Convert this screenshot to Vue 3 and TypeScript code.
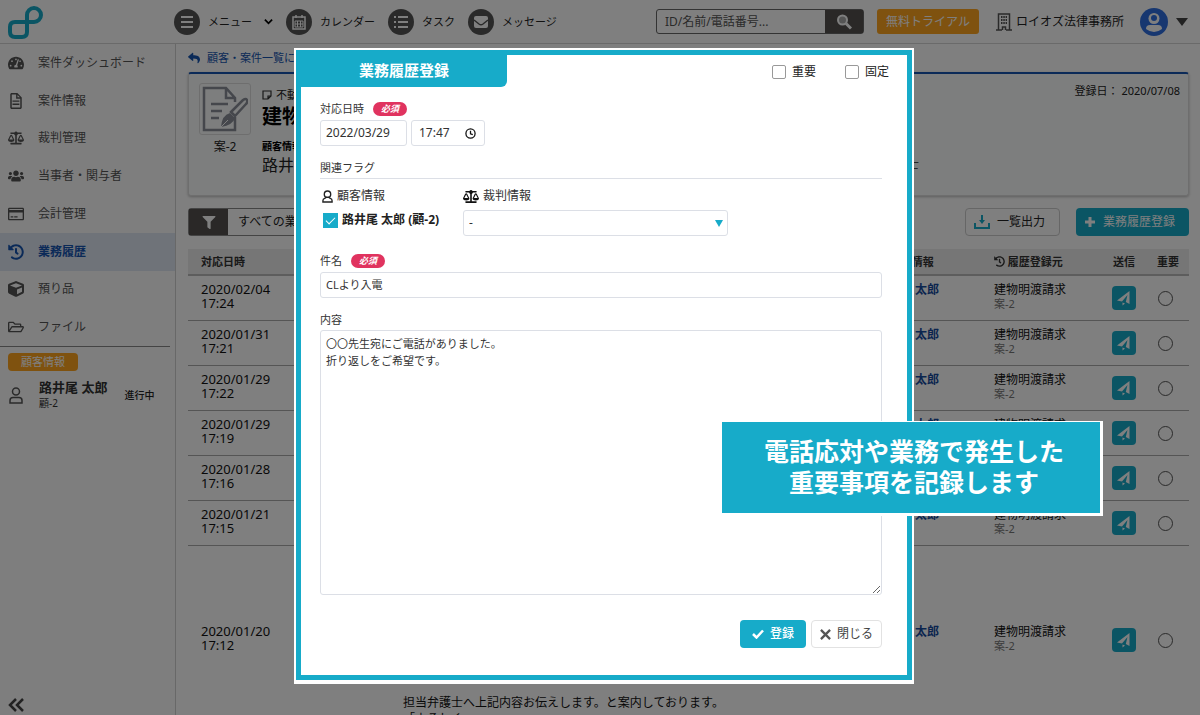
<script setup lang="ts">
import { ref } from 'vue'

interface NavItem {
  label: string
  icon: string
  box: string
  active?: boolean
}

const icons = {
  gauge:
    'M288 32C128.94 32 0 160.94 0 320c0 52.8 14.25 102.26 39.06 144.8 5.61 9.62 16.3 15.2 27.44 15.2h443c11.14 0 21.83-5.58 27.44-15.2C561.75 422.26 576 372.8 576 320c0-159.06-128.94-288-288-288zm0 64c14.71 0 26.58 10.13 30.32 23.65-1.11 2.26-2.64 4.23-3.45 6.67l-9.22 27.67c-5.13 3.49-10.97 6.01-17.64 6.01-17.67 0-32-14.33-32-32S270.33 96 288 96zM96 384c-17.67 0-32-14.33-32-32s14.33-32 32-32 32 14.33 32 32-14.33 32-32 32zm48-160c-17.67 0-32-14.33-32-32s14.33-32 32-32 32 14.33 32 32-14.33 32-32 32zm246.77-72.41l-61.33 184C343.13 347.33 352 364.54 352 384c0 11.72-3.38 22.55-8.88 32H232.88c-5.5-9.45-8.88-20.28-8.88-32 0-33.94 26.5-61.43 59.9-63.59l61.34-184.01c4.17-12.56 17.73-19.45 30.36-15.17 12.57 4.19 19.35 17.79 15.17 30.36zm14.66 57.2l15.52-46.55c3.47-1.29 7.13-2.23 11.05-2.23 17.67 0 32 14.33 32 32s-14.33 32-32 32c-11.38-.01-20.89-6.28-26.57-15.22zM480 384c-17.67 0-32-14.33-32-32s14.33-32 32-32 32 14.33 32 32-14.33 32-32 32z',
  file:
    'M64 0h180l140 140v324c0 27-21 48-48 48H64c-27 0-48-21-48-48V48C16 21 37 0 64 0zm0 48v416h272V180H204V48zm184 12v76h76zM88 236h220v44H88zm0 100h220v44H88z',
  scale:
    'M256 336h-.02c0-16.18 1.34-8.73-85.05-181.51-17.65-35.29-68.19-35.36-85.87 0C-2.06 328.75.02 320.33.02 336H0c0 44.18 57.31 80 128 80s128-35.82 128-80zM128 176l72 144H56l72-144zm511.98 160c0-16.18 1.34-8.73-85.05-181.51-17.65-35.29-68.19-35.36-85.87 0-87.12 174.26-85.04 165.84-85.04 181.51H384c0 44.18 57.31 80 128 80s128-35.82 128-80h-.02zM440 320l72-144 72 144H440zm88 128H352V153.25c23.51-10.29 41.16-31.48 46.39-57.25H528c8.84 0 16-7.16 16-16V48c0-8.84-7.16-16-16-16H383.64C369.04 12.68 346.09 0 320 0s-49.04 12.68-63.64 32H112c-8.84 0-16 7.16-16 16v32c0 8.84 7.16 16 16 16h129.61c5.23 25.76 22.87 46.96 46.39 57.25V448H112c-8.84 0-16 7.16-16 16v32c0 8.84 7.16 16 16 16h416c8.84 0 16-7.16 16-16v-32c0-8.84-7.16-16-16-16z',
  users:
    'M96 224c35.3 0 64-28.700 64-64s-28.700-64-64-64-64 28.700-64 64 28.700 64 64 64zm448 0c35.300 0 64-28.700 64-64s-28.700-64-64-64-64 28.700-64 64 28.700 64 64 64zm32 32h-64c-17.600 0-33.500 7.100-45.100 18.600 40.300 22.100 68.900 62 75.100 109.400h66c17.700 0 32-14.300 32-32v-32c0-35.300-28.700-64-64-64zm-256 0c61.900 0 112-50.100 112-112S381.900 32 320 32 208 82.100 208 144s50.100 112 112 112zm76.800 32h-8.300c-20.800 10-43.900 16-68.500 16s-47.600-6-68.500-16h-8.300C179.600 288 128 339.600 128 403.200V432c0 26.500 21.500 48 48 48h288c26.500 0 48-21.500 48-48v-28.800c0-63.600-51.600-115.200-115.200-115.200zm-223.700-13.400C161.500 263.100 145.600 256 128 256H64c-35.300 0-64 28.700-64 64v32c0 17.700 14.300 32 32 32h65.900c6.300-47.400 34.900-87.300 75.200-109.400z',
  card:
    'M48 32h480c27 0 48 21 48 48v352c0 27-21 48-48 48H48c-27 0-48-21-48-48V80c0-27 21-48 48-48zm0 48v36h480V80zm0 124v228h480V204zm48 132h96v48H96zm128 0h120v48H224z',
  history:
    'M504 255.531c.253 136.64-111.18 248.372-247.82 248.468-59.015.042-113.223-20.53-155.822-54.911-11.077-8.94-11.905-25.541-1.839-35.607l11.267-11.267c8.609-8.609 22.353-9.551 31.891-1.984C173.062 425.135 212.781 440 256 440c101.705 0 184-82.311 184-184 0-101.705-82.311-184-184-184-48.814 0-93.149 18.969-126.068 49.932l50.754 50.754c10.08 10.08 2.941 27.314-11.313 27.314H24c-8.837 0-16-7.163-16-16V38.627c0-14.254 17.234-21.393 27.314-11.314l49.372 49.372C129.209 34.136 189.552 8 256 8c136.81 0 247.747 110.78 248 247.531zm-180.912 78.784l9.823-12.63c8.138-10.463 6.253-25.542-4.21-33.679L288 256.349V152c0-13.255-10.745-24-24-24h-16c-13.255 0-24 10.745-24 24v135.651l65.409 50.874c10.463 8.137 25.541 6.253 33.679-4.21z',
  cube:
    'M239.1 6.3l-208 78c-18.7 7-31.1 25-31.1 45v225.1c0 18.2 10.3 34.8 26.5 42.9l208 104c13.5 6.8 29.4 6.8 42.9 0l208-104c16.3-8.1 26.5-24.8 26.5-42.9V129.3c0-20-12.4-37.9-31.1-44.9l-208-78C262 2.2 250 2.2 239.1 6.3zM256 68.4l192 72v1.1l-192 78-192-78v-1.100l192-72zm32 356V275.5l160-65v133.9l-160 80z',
  folder:
    'M48 64h150l64 64h170c27 0 48 21 48 48v48h48c36 0 58 38 40 70l-78 134c-9 14-24 20-40 20H48c-27 0-48-21-48-48V112c0-27 21-48 48-48zm0 48v246l64-110c8-15 23-24 40-24h280v-48H242l-64-64zm104 160L72 400h378l78-128z',
  reply:
    'M8.309 189.836L184.313 37.851C199.719 24.546 224 35.347 224 56.015v80.053c160.629 1.839 288 34.032 288 186.258 0 61.441-39.581 122.309-83.333 154.132-13.653 9.931-33.111-2.533-28.077-18.631 45.344-145.012-21.507-183.51-176.59-185.742V360c0 20.700-24.300 31.453-39.687 18.164l-176.004-152c-11.071-9.562-11.086-26.753 0-36.328z',
  filter:
    'M487.976 0H24.028C2.71 0-8.047 25.866 7.058 40.971L192 225.941V432c0 7.831 3.821 15.17 10.237 19.662l80 55.98C298.02 518.69 320 507.493 320 487.98V225.941l184.947-184.970C520.021 25.896 509.338 0 487.976 0z',
}

const navItems: NavItem[] = [
  { label: '案件ダッシュボード', icon: icons.gauge, box: '0 0 576 512' },
  { label: '案件情報', icon: icons.file, box: '0 0 400 512' },
  { label: '裁判管理', icon: icons.scale, box: '0 0 640 512' },
  { label: '当事者・関与者', icon: icons.users, box: '0 0 640 512' },
  { label: '会計管理', icon: icons.card, box: '0 0 576 512' },
  { label: '業務履歴', icon: icons.history, box: '0 0 512 512', active: true },
  { label: '預り品', icon: icons.cube, box: '0 0 512 512' },
  { label: 'ファイル', icon: icons.folder, box: '0 0 576 512' },
]

const rows = [
  { date: '2020/02/04', time: '17:24', lines: [] as string[] },
  { date: '2020/01/31', time: '17:21', lines: [] },
  { date: '2020/01/29', time: '17:22', lines: [] },
  { date: '2020/01/29', time: '17:19', lines: [] },
  { date: '2020/01/28', time: '17:16', lines: [] },
  { date: '2020/01/21', time: '17:15', lines: [] },
  {
    date: '2020/01/20',
    time: '17:12',
    lines: ['担当弁護士へ上記内容お伝えします。と案内しております。', '「よろしく」'],
  },
]

const keyword = ref('')
const important = ref(false)
const pinned = ref(false)
const date = ref('2022/03/29')
const time = ref('17:47')
const client = ref(true)
const trial = ref('-')
const subject = ref('CLより入電')
const body = ref('〇〇先生宛にご電話がありました。\n折り返しをご希望です。')
</script>

<template>
  <div class="app">
    <header class="topbar">
      <a href="#" class="logo" aria-label="ホーム">
        <svg viewBox="0 0 36 36" width="36" height="36" fill="none" stroke="#17abc9" stroke-width="4">
          <path d="M20 19V11A7 7 0 1 1 27 18H8Q3 18 3 23V28Q3 33 8 33H15Q20 33 20 28Z" />
        </svg>
      </a>
      <nav class="topnav">
        <a href="#" class="toplink">
          <span class="disc"><svg viewBox="0 0 16 16" width="16" height="16" fill="none" stroke="#fff" stroke-width="2"><path d="M2 3h12M2 8h12M2 13h12" /></svg></span>
          メニュー
          <svg class="chev" viewBox="0 0 10 10" width="9" height="9" fill="none" stroke="#000" stroke-width="2"><path d="M1 3l4 4 4-4" /></svg>
        </a>
        <a href="#" class="toplink">
          <span class="disc"><svg viewBox="0 0 16 16" width="16" height="16" fill="none" stroke="#fff" stroke-width="1"><path stroke-width="1.500" d="M2 3h12v12H2zM5 1v3M11 1v3" /><path d="M4 7h8v6H4zM4 10h8M6.500 7v6M9.500 7v6" /></svg></span>
          カレンダー
        </a>
        <a href="#" class="toplink">
          <span class="disc"><svg viewBox="0 0 16 16" width="16" height="16" fill="none" stroke="#fff" stroke-width="2"><path d="M1 3h2M5 3h10M1 8h2M5 8h10M1 13h2M5 13h10" /></svg></span>
          タスク
        </a>
        <a href="#" class="toplink">
          <span class="disc"><svg viewBox="0 0 16 16" width="16" height="16"><rect x="1" y="2" width="14" height="12" rx="2" fill="#fff" /><path d="M1 6l5 4q2 1.500 4 0l5-4" fill="none" stroke="#555" stroke-width="1.500" /></svg></span>
          メッセージ
        </a>
      </nav>
      <form class="search" @submit.prevent>
        <input v-model="keyword" type="text" aria-label="検索" placeholder="ID/名前/電話番号..." />
        <button type="submit" aria-label="検索する">
          <svg viewBox="0 0 16 16" width="16" height="16" fill="none" stroke="#fff"><circle cx="6.500" cy="6" r="4.500" stroke-width="2" fill="#aaa" /><path d="M10 9.500l5 5" stroke-width="3" /></svg>
        </button>
      </form>
      <button type="button" class="trial">無料トライアル</button>
      <span class="office">
        <svg viewBox="0 0 16 18" width="16" height="18" fill="none" stroke="#555" stroke-width="1.500"><path d="M2.500 17V1h11v16M0 17h6M10 17h6" /><path d="M6.500 17v-3h3v3" /><path d="M5 4h6M5 7h6M5 10h6" stroke-width="2" stroke-dasharray="1.500 .8" /></svg>
        ロイオズ法律事務所
      </span>
      <button type="button" class="account" aria-label="アカウント">
        <svg viewBox="0 0 28 28" width="28" height="28"><circle cx="14" cy="14" r="14" fill="#2f6fe0" /><circle cx="14" cy="10.500" r="5.500" fill="#fff" /><circle cx="14" cy="10" r="3" fill="#2f6fe0" /><path d="M6 21q0-4 4-4h8q4 0 4 4q-8 6-16 0z" fill="#fff" /></svg>
        <svg viewBox="0 0 12 8" width="12" height="8"><path d="M0 0h12L6 8z" fill="#444" /></svg>
      </button>
    </header>

    <div class="columns">
      <aside class="sidebar">
        <nav class="sidenav">
          <a v-for="item in navItems" :key="item.label" href="#" :class="{ active: item.active }">
            <svg :viewBox="item.box" width="16" height="16" fill="currentColor" fill-rule="evenodd"><path :d="item.icon" /></svg>
            {{ item.label }}
          </a>
        </nav>
        <div class="client">
          <span class="tag">顧客情報</span>
          <a href="#" class="person">
            <svg viewBox="0 0 14 17" width="16" height="17" fill="none" stroke="#555" stroke-width="1.500"><circle cx="7" cy="4.500" r="3.500" /><path d="M1 16v-2.500q0-3 3-3h6q3 0 3 3V16z" /></svg>
            <span class="who"><b>路井尾 太郎</b><small>顧-2</small></span>
            <span class="state">進行中</span>
          </a>
        </div>
        <button type="button" class="collapse" aria-label="メニューを閉じる">
          <svg viewBox="0 0 16 14" width="16" height="14" fill="none" stroke="#444" stroke-width="2.500"><path d="M8 1L2 7l6 6M15 1L9 7l6 6" /></svg>
        </button>
      </aside>

      <main class="main">
        <a href="#" class="back">
          <svg viewBox="0 0 512 512" width="12" height="12" fill="currentColor"><path :d="icons.reply" /></svg>
          顧客・案件一覧に戻る
        </a>
        <section class="case">
          <div class="case-id">
            <div class="thumb">
              <svg viewBox="0 0 46 46" width="46" height="46" fill="none" stroke="#8a8f99" stroke-width="2.500">
                <path d="M33 31V44H2V2H24L33 12V16M24 2V12H33M9 18H26M9 25H20M9 32H17" />
                <path d="M29 26L41 14q3-2 4 0t-1 4L33 30z" /><path d="M28 27l5 5q-2 7-14 9q1-12 9-14z" fill="#8a8f99" stroke="none" /><path d="M19 41l7-7" stroke="#fff" stroke-width="1" />
              </svg>
            </div>
            案-2
          </div>
          <div class="case-body">
            <span class="kind"><svg viewBox="0 0 10 10" width="10" height="10" fill="none" stroke="#333" stroke-width="1.200"><path d="M1 1h8v5L6 9H1zM6 9V6h3" /></svg>不動産</span>
            <h1>建物明渡請求</h1>
            <b class="mini">顧客情報</b>
            <span class="name">路井尾 太郎</span>
          </div>
          <div class="case-side">
            <span>登録日： 2020/07/08</span>
            <span class="lawyer">弁護士</span>
          </div>
        </section>

        <div class="toolbar">
          <div class="filter">
            <button type="button" aria-label="絞り込み"><svg viewBox="0 0 512 512" width="14" height="13" fill="#fff"><path :d="icons.filter" /></svg></button>
            <select aria-label="業務履歴の種類"><option>すべての業務履歴</option></select>
          </div>
          <button type="button" class="export">
            <svg viewBox="0 0 16 14" width="16" height="14" fill="none" stroke="#17abc9" stroke-width="2"><path d="M1 8v5h14V8M8 0v6" /><path d="M5 5h6L8 9z" fill="#17abc9" stroke="none" /></svg>
            一覧出力
          </button>
          <button type="button" class="add">
            <svg viewBox="0 0 12 12" width="12" height="12" fill="none" stroke="#fff" stroke-width="3"><path d="M6 1v10M1 6h10" /></svg>
            業務履歴登録
          </button>
        </div>

        <table class="history">
          <colgroup><col class="c-date" /><col class="c-body" /><col class="c-client" /><col class="c-from" /><col class="c-send" /><col class="c-flag" /></colgroup>
          <thead>
            <tr>
              <th>対応日時</th><th>内容</th>
              <th><svg viewBox="0 0 12 14" width="11" height="11" fill="none" stroke="#333" stroke-width="2"><circle cx="6" cy="4" r="3" /><path d="M1 13q0-4 5-4t5 4z" /></svg> 顧客情報</th>
              <th><svg class="from-icon" viewBox="0 0 512 512" width="11" height="11" fill="currentColor"><path :d="icons.history" /></svg> 履歴登録元</th>
              <th class="mid">送信</th><th class="mid">重要</th>
            </tr>
          </thead>
          <tbody>
            <tr v-for="row in rows" :key="row.date + row.time" :class="{ tall: row.lines.length }">
              <td class="when">{{ row.date }}<br />{{ row.time }}</td>
              <td class="text"><p v-for="line in row.lines" :key="line">{{ line }}</p></td>
              <td class="person-cell"><a href="#">路井尾 太郎</a></td>
              <td class="from">建物明渡請求<small>案-2</small></td>
              <td class="mid">
                <button type="button" class="send" aria-label="送信">
                  <svg viewBox="0 0 16 16" width="16" height="16" fill="#fff"><path d="M1 10.500L13.500 1V14L9.800 12L11.500 5L6 11.500Z" /><path d="M6.500 12.500l2.500 1L6.500 15.500z" /></svg>
                </button>
              </td>
              <td class="mid"><input type="radio" :name="'flag-' + row.time" aria-label="重要" /></td>
            </tr>
          </tbody>
        </table>
      </main>
    </div>

    <div class="overlay">
      <div class="dialog" role="dialog" aria-labelledby="dialog-title">
        <div class="frame">
          <div class="head">
            <h2 id="dialog-title">業務履歴登録</h2>
            <div class="flags">
              <label class="check"><input v-model="important" type="checkbox" />重要</label>
              <label class="check"><input v-model="pinned" type="checkbox" />固定</label>
            </div>
          </div>

          <form class="form" @submit.prevent>
            <div class="lab"><label for="f-date">対応日時</label><em>必須</em></div>
            <div class="times">
              <input id="f-date" v-model="date" type="text" class="date" />
              <div class="clock">
                <input v-model="time" type="text" aria-label="対応時刻" />
                <svg viewBox="0 0 12 12" width="11" height="11" fill="none" stroke="#111" stroke-width="1.400"><circle cx="6" cy="6" r="5" /><path d="M6 3v3.300l2.500 1" /></svg>
              </div>
            </div>

            <h3>関連フラグ</h3>
            <div class="related">
              <div>
                <div class="sub">
                  <svg viewBox="0 0 12 14" width="11" height="13" fill="none" stroke="#222" stroke-width="1.500"><circle cx="6" cy="4.500" r="3.500" /><path d="M1 13v-1.500q0-2 2-2.500l1.500-1h3L9 9q2 .5 2 2.500V13z" /></svg>
                  顧客情報
                </div>
                <label class="check on"><input v-model="client" type="checkbox" />路井尾 太郎 (顧-2)</label>
              </div>
              <div>
                <label class="sub" for="f-trial">
                  <svg viewBox="0 0 640 512" width="16" height="13" fill="#111"><path :d="icons.scale" /></svg>
                  裁判情報
                </label>
                <div class="picker">
                  <select id="f-trial" v-model="trial"><option>-</option></select>
                  <svg viewBox="0 0 8 7" width="8" height="7"><path d="M0 0h8L4 7z" fill="#17abc9" /></svg>
                </div>
              </div>
            </div>

            <div class="lab"><label for="f-subject">件名</label><em>必須</em></div>
            <input id="f-subject" v-model="subject" type="text" class="subject" />

            <div class="lab body-lab"><label for="f-body">内容</label></div>
            <textarea id="f-body" v-model="body"></textarea>

            <div class="actions">
              <button type="submit" class="ok"><svg viewBox="0 0 12 10" width="12" height="10" fill="none" stroke="#fff" stroke-width="2.500"><path d="M1 5l3.500 3.500L11 1.500" /></svg>登録</button>
              <button type="button" class="close"><svg viewBox="0 0 12 12" width="11" height="11" fill="none" stroke="#555" stroke-width="2.500"><path d="M1 1l10 10M11 1L1 11" /></svg>閉じる</button>
            </div>
          </form>
        </div>
        <p class="callout">電話応対や業務で発生した<br />重要事項を記録します</p>
      </div>
    </div>
  </div>
</template>

<style>
html,
body,
#app {
  height: 100%;
  margin: 0;
}
</style>

<style scoped>
* {
  box-sizing: border-box;
}

.app {
  position: relative;
  display: flex;
  flex-direction: column;
  height: 100%;
  overflow: hidden;
  background: #fff;
  color: #222;
  font-family: 'Noto Sans', 'Noto Sans CJK JP', sans-serif;
  font-size: 12px;
  line-height: 16px;
}

button,
input,
select,
textarea {
  margin: 0;
  padding: 0;
  font: inherit;
  color: inherit;
}

button {
  display: inline-flex;
  align-items: center;
  justify-content: center;
  border: 0;
  background: none;
}

a {
  color: inherit;
  text-decoration: none;
}

svg {
  flex: none;
}

/* Top bar */
.topbar {
  display: flex;
  flex: none;
  align-items: center;
  height: 44px;
  padding: 0 12px 0 7px;
  border-bottom: 1px solid #d4d4d4;
}

.logo {
  display: flex;
  width: 167px;
}

.topnav {
  display: flex;
  gap: 13px;
}

.toplink {
  display: flex;
  align-items: center;
  gap: 8px;
  font-size: 11px;
}

.disc {
  display: flex;
  align-items: center;
  justify-content: center;
  width: 26px;
  height: 26px;
  border-radius: 50%;
  background: #555;
}

.chev {
  margin-left: 4px;
}

.search {
  display: flex;
  width: 208px;
  height: 25px;
  margin-left: auto;
  border: 1px solid #666;
  border-radius: 3px;
}

.search input {
  flex: 1;
  min-width: 0;
  padding-left: 8px;
  border: 0;
  background: none;
}

.search input::placeholder {
  color: #555;
}

.search button {
  width: 38px;
  background: #55504e;
}

.trial {
  width: 102px;
  height: 25px;
  margin-left: 13px;
  border-radius: 3px;
  background: #ffa51f;
  color: #fff;
}

.office {
  display: flex;
  align-items: center;
  gap: 4px;
  margin-left: 17px;
  white-space: nowrap;
}

.account {
  gap: 8px;
  margin-left: 16px;
}

/* Sidebar */
.columns {
  display: flex;
  flex: 1;
  min-height: 0;
}

.sidebar {
  display: flex;
  flex: none;
  flex-direction: column;
  width: 176px;
  border-right: 1px solid #d0d0d0;
  background: #fdfdfd;
  color: #555;
}

.sidenav {
  display: grid;
  grid-template-rows: repeat(8, 1fr);
  height: 302px;
}

.sidenav a {
  display: flex;
  align-items: center;
  gap: 14px;
  padding-left: 8px;
}

.sidenav .active {
  background: #dee6f2;
  color: #1655b0;
  font-weight: 700;
}

.client {
  display: flex;
  flex-direction: column;
  align-items: flex-start;
  margin-right: 5px;
  padding: 6px 0 0 8px;
  border-top: 1px solid #888;
}

.tag {
  padding: 1px 13px;
  border-radius: 4px;
  background: #ffa51f;
  color: #fff;
  font-size: 11px;
}

.person {
  display: flex;
  align-items: center;
  align-self: stretch;
  gap: 15px;
  margin-top: 8px;
}

.who {
  display: flex;
  flex-direction: column;
  color: #333;
  font-size: 13px;
}

.who small {
  font-size: 10px;
}

.state {
  margin-left: 2px;
  color: #222;
  font-size: 10px;
  font-weight: 500;
}

.collapse {
  align-self: flex-start;
  margin: auto 0 3px 8px;
}

/* Main column */
.main {
  flex: 1;
  min-width: 0;
  padding: 6px 11px 0 12px;
}

.back {
  display: flex;
  align-items: center;
  gap: 7px;
  color: #1655b0;
  font-size: 11px;
}

.case {
  display: flex;
  height: 124px;
  margin-top: 6px;
  padding: 9px 8px 0 10px;
  border: 1px solid #ddd;
  border-top: 2px solid #1655b0;
  border-radius: 3px;
  background: #fbfdfd;
  box-shadow: 0 1px 3px #bbb;
}

.case-id {
  display: flex;
  flex-direction: column;
  align-items: center;
  gap: 4px;
  width: 52px;
}

.thumb {
  display: flex;
  align-items: center;
  justify-content: center;
  width: 52px;
  height: 52px;
  border: 1px solid #ddd;
  border-radius: 3px;
}

.case-body {
  display: flex;
  flex-direction: column;
  flex: 1;
  padding: 4px 0 0 11px;
}

.kind {
  display: flex;
  align-items: center;
  gap: 4px;
  font-size: 11px;
}

.case-body h1 {
  margin: 0 0 8px;
  color: #000;
  font-size: 20px;
  line-height: 28px;
}

.mini {
  font-size: 10px;
  line-height: 14px;
  color: #000;
}

.name {
  font-size: 16px;
  line-height: 24px;
}

.case-side {
  display: flex;
  flex-direction: column;
  align-items: flex-end;
  justify-content: space-between;
  height: 90px;
  font-size: 11px;
}

.lawyer {
  width: 297px;
  font-size: 12px;
}

.toolbar {
  display: flex;
  align-items: center;
  margin-top: 12px;
}

.filter {
  display: flex;
  width: 300px;
  height: 28px;
  margin-right: auto;
  border: 1px solid #888;
  border-radius: 3px;
}

.filter button {
  width: 39px;
  background: #55504e;
}

.filter select {
  flex: 1;
  padding-left: 10px;
  border: 0;
  background: none;
  appearance: none;
  color: #222;
}

.export,
.add {
  justify-content: flex-start;
  height: 28px;
  gap: 7px;
  padding-left: 8px;
  border-radius: 4px;
}

.export {
  width: 95px;
  border: 1px solid #ccc;
}

.add {
  width: 113px;
  margin-left: 16px;
  background: #17abc9;
  color: #fff;
}

/* History table */
.history {
  width: 100%;
  margin-top: 13px;
  border-collapse: collapse;
  table-layout: fixed;
}

.c-date {
  width: 215px;
}

.c-client {
  width: 118px;
}

.c-from {
  width: 107px;
}

.c-send {
  width: 46px;
}

.c-flag {
  width: 42px;
}

.history th {
  height: 26px;
  padding: 0;
  border-bottom: 2px solid #bbb;
  background: #ececec;
  color: #333;
  font-size: 11px;
  text-align: left;
  white-space: nowrap;
}

.history th:first-child,
.history td:first-child {
  padding-left: 13px;
}

.history .mid {
  text-align: center;
}

.from-icon {
  vertical-align: -1px;
}

.history td {
  height: 45px;
  padding: 0;
  border-bottom: 1px solid #aaa;
  color: #111;
}

.history .tall td {
  height: 190px;
}

.history .when {
  padding-bottom: 4px;
  font-size: 13px;
  line-height: 14px;
}

.history .text {
  vertical-align: bottom;
}

.text p {
  margin: 0;
  line-height: 16px;
}

.text p:last-child {
  margin-bottom: 8px;
}

.person-cell a {
  display: block;
  margin-bottom: 16px;
  color: #164a9e;
  font-weight: 700;
}

.history .from {
  padding-bottom: 2px;
  line-height: 14px;
}

.from small {
  display: block;
  color: #777;
  font-size: 11px;
}

.send {
  width: 24px;
  height: 24px;
  border-radius: 4px;
  background: #17abc9;
  vertical-align: middle;
}

.history input {
  width: 15px;
  height: 15px;
  margin-right: 5px;
  border: 1px solid #555;
  border-radius: 50%;
  appearance: none;
  vertical-align: middle;
}

/* Dialog */
.overlay {
  position: absolute;
  inset: 0;
  display: flex;
  align-items: flex-start;
  justify-content: center;
  padding: 48px 0 0 8px;
  background: rgba(0, 0, 0, 0.5);
}

.dialog {
  position: relative;
  width: 620px;
  padding: 2px 2px 4px;
  background: #fff;
}

.frame {
  padding-bottom: 27px;
  border: 5px solid #17abc9;
  background: #fff;
}

.head {
  display: flex;
  align-items: center;
  justify-content: space-between;
}

.head h2 {
  width: 206px;
  margin: 0;
  padding: 5px 0 7px;
  border-bottom-right-radius: 6px;
  background: #17abc9;
  color: #fff;
  font-size: 15px;
  line-height: 20px;
  text-align: center;
}

.flags {
  display: flex;
  gap: 29px;
  padding: 2px 18px 0 0;
}

.check {
  display: flex;
  align-items: center;
  gap: 6px;
}

.check input {
  width: 14px;
  height: 14px;
  border: 1px solid #999;
  border-radius: 2px;
  background: #fff;
  appearance: none;
}

.check input:checked {
  border-color: #17abc9;
  background: #17abc9;
}

.check input:checked::before {
  content: '';
  display: block;
  width: 4px;
  height: 8px;
  margin: 1px auto 0;
  border: solid #fff;
  border-width: 0 1px 1px 0;
  transform: rotate(45deg);
}

.check.on {
  gap: 4px;
  padding-left: 3px;
  font-weight: 700;
}

.check.on input {
  width: 15px;
  height: 15px;
  border-radius: 0;
}

.form {
  padding: 14px 25px 0 19px;
}

.lab {
  display: flex;
  align-items: center;
  gap: 9px;
  color: #333;
  font-size: 11px;
}

.lab em {
  padding: 0 8px;
  border-radius: 7px;
  background: #e0335f;
  color: #fff;
  font-size: 9px;
  font-weight: 700;
  line-height: 14px;
}

.form input[type='text'],
.form select,
.form textarea {
  border: 1px solid #dcdfe6;
  border-radius: 3px;
  background: #fff;
  color: #333;
}

.form .times input {
  width: 87px;
  height: 26px;
  padding: 0 0 2px 5px;
  font-size: 12px;
}

.times {
  display: flex;
  gap: 4px;
  margin-top: 3px;
}

.times .clock {
  position: relative;
}

.form .clock input {
  width: 74px;
  padding-left: 7px;
}

.clock svg {
  position: absolute;
  top: 8px;
  right: 9px;
}

.form h3 {
  margin: 14px 0 0;
  padding-bottom: 2px;
  border-bottom: 1px solid #dcdfe6;
  color: #333;
  font-size: 11px;
  font-weight: 400;
}

.related {
  display: grid;
  grid-template-columns: 143px 265px;
  padding: 9px 0 17px;
}

.sub {
  display: flex;
  align-items: center;
  gap: 4px;
  color: #333;
}

.related > div:first-child .sub {
  padding-left: 2px;
  margin-bottom: 8px;
}

.picker {
  position: relative;
  margin-top: 6px;
}

.form .picker select {
  width: 100%;
  height: 26px;
  padding-left: 5px;
  appearance: none;
}

.picker svg {
  position: absolute;
  top: 10px;
  right: 5px;
}

.form .subject {
  display: block;
  width: 100%;
  height: 26px;
  margin-top: 3px;
  padding: 0 5px 2px;
  font-size: 11px;
}

.body-lab {
  margin-top: 14px;
}

.form textarea {
  display: block;
  width: 100%;
  height: 265px;
  margin-top: 2px;
  padding: 4px 5px;
  font-size: 11px;
  line-height: 17px;
  resize: vertical;
}

.actions {
  display: flex;
  justify-content: flex-end;
  gap: 5px;
  margin-top: 25px;
}

.actions button {
  height: 28px;
  gap: 6px;
  border-radius: 4px;
}

.ok {
  width: 66px;
  background: #17abc9;
  color: #fff;
  font-weight: 500;
}

.close {
  width: 71px;
  border: 1px solid #e2e2e2;
  color: #444;
}

.callout {
  position: absolute;
  top: 374px;
  right: -186px;
  margin: 0;
  padding: 14px 36px 15px 42px;
  background: #17abc9;
  box-shadow: 1px 1px 0 2px #fff;
  color: #fff;
  font-size: 25px;
  font-weight: 700;
  line-height: 31px;
  text-align: center;
  white-space: nowrap;
}
</style>
